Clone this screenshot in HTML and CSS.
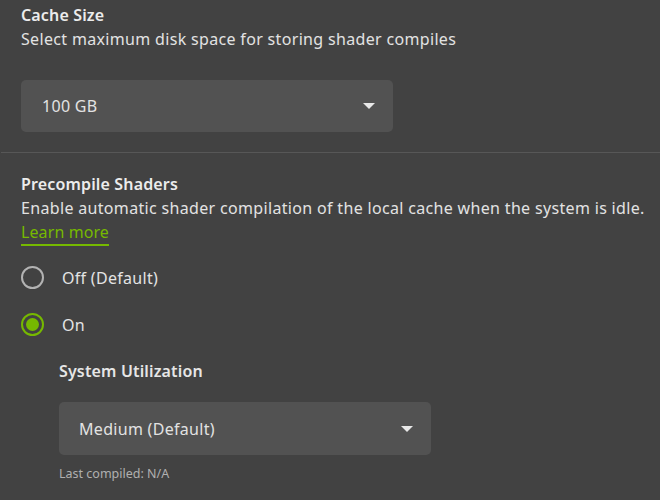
FILE: index.html
```html
<!DOCTYPE html>
<html>
<head>
<meta charset="utf-8">
<link rel="stylesheet" href="styles.css">
</head>
<body>
<div class="page">
  <section class="section first">
    <div class="title">Cache Size</div>
    <div class="desc">Select maximum disk space for storing shader compiles</div>
    <div class="select cache-select">
      <span class="select-value">100 GB</span>
      <svg class="caret" width="12" height="6" viewBox="0 0 12 6"><path d="M0 0H12L6 6Z" fill="#e8e8e8"/></svg>
    </div>
  </section>
  <div class="divider"></div>
  <section class="section">
    <div class="title">Precompile Shaders</div>
    <div class="desc">Enable automatic shader compilation of the local cache when the system is idle.</div>
    <a class="learn" href="#">Learn more</a>
    <div class="radios">
      <label class="radio">
        <span class="dot"></span>
        <span class="radio-label">Off (Default)</span>
      </label>
      <label class="radio checked">
        <span class="dot"></span>
        <span class="radio-label">On</span>
      </label>
    </div>
    <div class="sub">
      <div class="sub-title">System Utilization</div>
      <div class="select util-select">
        <span class="select-value">Medium (Default)</span>
        <svg class="caret" width="12" height="6" viewBox="0 0 12 6"><path d="M0 0H12L6 6Z" fill="#e8e8e8"/></svg>
      </div>
      <div class="note">Last compiled: N/A</div>
    </div>
  </section>
</div>
</body>
</html>
```
FILE: styles.css
```css
html, body {
  margin: 0;
  padding: 0;
  background: #424242;
}
body {
  font-family: "Noto Sans", "Liberation Sans", sans-serif;
  color: #e6e6e6;
  width: 660px;
  height: 500px;
  overflow: hidden;
  letter-spacing: 0.3px;
}
.page {
  display: flex;
  flex-direction: column;
}
.section {
  padding-left: 21px;
  display: flex;
  flex-direction: column;
  align-items: flex-start;
}
.section.first {
  padding-top: 3px;
}
.title {
  font-size: 16px;
  font-weight: 600;
  line-height: 24px;
  color: #ececec;
  letter-spacing: 0.15px;
}
.desc {
  font-size: 16px;
  line-height: 24px;
  color: #e2e2e2;
  letter-spacing: 0.33px;
}
.select {
  box-sizing: border-box;
  width: 372px;
  height: 52px;
  background: #525252;
  border-radius: 5px;
  display: flex;
  align-items: center;
  justify-content: space-between;
  padding: 0 18px 0 21px;
}
.cache-select {
  margin-top: 29px;
}
.select-value {
  font-size: 16px;
  color: #e2e2e2;
}
.caret {
  display: block;
}
.divider {
  height: 1px;
  background: #575757;
  margin: 20px 0 19px 1px;
}
.learn {
  font-size: 16px;
  line-height: 24px;
  color: #76b900;
  text-decoration: none;
  border-bottom: 2px solid #76b900;
  letter-spacing: 0.1px;
}
.radios {
  display: flex;
  flex-direction: column;
  margin-top: 8px;
}
.radio {
  height: 47px;
  display: flex;
  align-items: center;
  gap: 18px;
}
.dot {
  box-sizing: border-box;
  width: 23px;
  height: 23px;
  border-radius: 50%;
  border: 2px solid #b3b3b3;
  display: flex;
  align-items: center;
  justify-content: center;
}
.radio.checked .dot {
  border-color: #76b900;
}
.radio.checked .dot::after {
  content: "";
  width: 13px;
  height: 13px;
  border-radius: 50%;
  background: #76b900;
}
.radio-label {
  font-size: 16px;
  color: #e4e4e4;
}
.sub {
  margin-left: 38px;
  margin-top: 11px;
  display: flex;
  flex-direction: column;
}
.sub-title {
  font-size: 16px;
  font-weight: 600;
  line-height: 24px;
  color: #e6e6e6;
  letter-spacing: 0.15px;
}
.util-select {
  margin-top: 19px;
  height: 53px;
  padding-left: 20px;
}
.note {
  margin-top: 9px;
  font-size: 12.5px;
  line-height: 20px;
  color: #b0b0b0;
  letter-spacing: 0;
}
```
